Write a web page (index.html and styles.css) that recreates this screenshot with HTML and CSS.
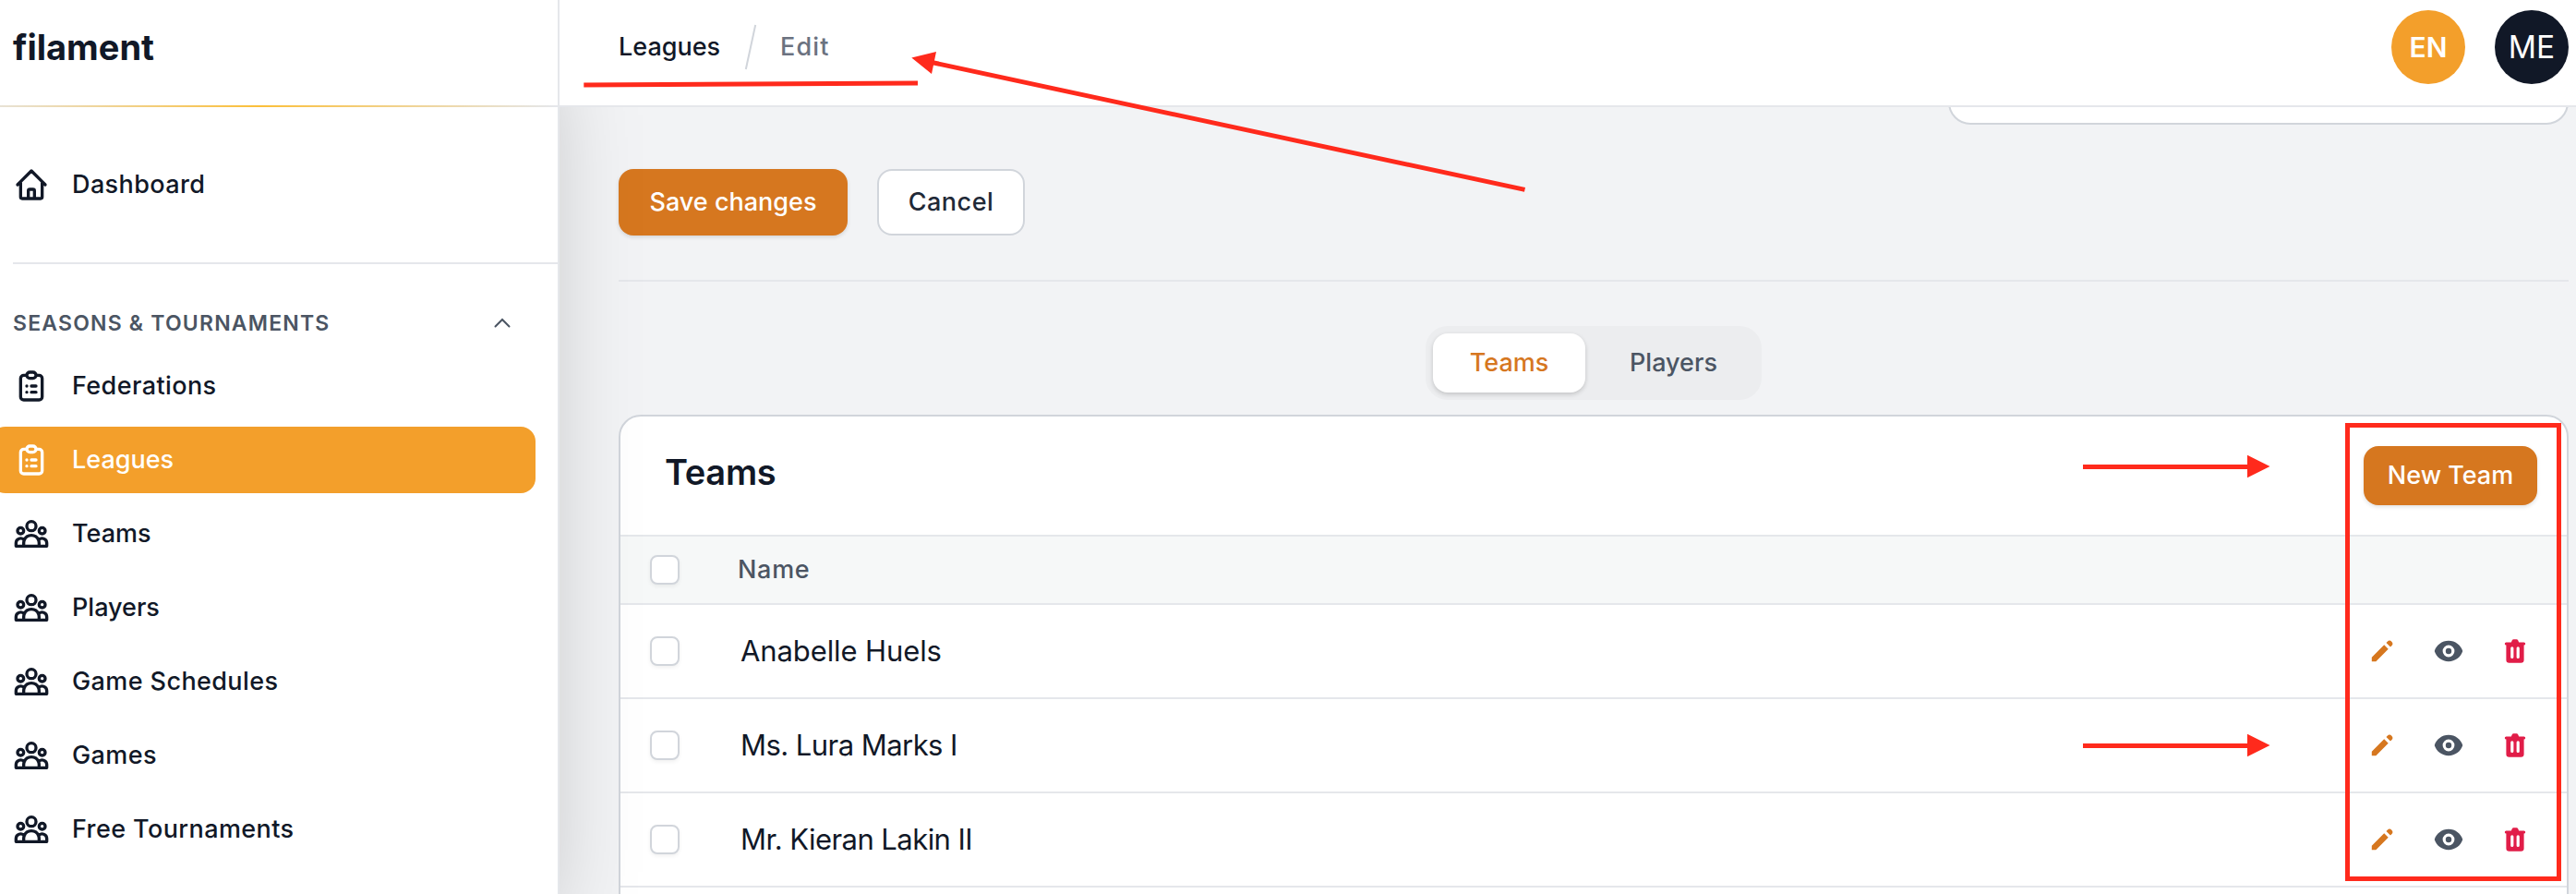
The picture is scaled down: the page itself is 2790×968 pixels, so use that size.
FILE: index.html
```html
<!DOCTYPE html>
<html lang="en">
<head>
<meta charset="utf-8">
<title>Edit League - filament</title>
<link rel="stylesheet" href="styles.css">
</head>
<body>
<svg class="sprite" aria-hidden="true">
  <symbol id="home" viewBox="0 0 24 24"><path d="M3 12l2-2m0 0l7-7 7 7M5 10v10a1 1 0 001 1h3m10-11l2 2m-2-2v10a1 1 0 01-1 1h-3m-6 0a1 1 0 001-1v-4a1 1 0 011-1h2a1 1 0 011 1v4a1 1 0 001 1m-6 0h6"/></symbol>
  <symbol id="clipboard" viewBox="0 0 24 24"><path d="M9 5H7a2 2 0 00-2 2v12a2 2 0 002 2h10a2 2 0 002-2V7a2 2 0 00-2-2h-2M9 5a2 2 0 002 2h2a2 2 0 002-2M9 5a2 2 0 012-2h2a2 2 0 012 2m-3 7h3m-3 4h3m-6-4h.01M9 16h.01"/></symbol>
  <symbol id="group" viewBox="0 0 24 24"><path d="M17 20h5v-2a3 3 0 00-5.356-1.857M17 20H7m10 0v-2c0-.656-.126-1.283-.356-1.857M7 20H2v-2a3 3 0 015.356-1.857M7 20v-2c0-.656.126-1.283.356-1.857m0 0a5.002 5.002 0 019.288 0M15 7a3 3 0 11-6 0 3 3 0 016 0zm6 3a2 2 0 11-4 0 2 2 0 014 0zM7 10a2 2 0 11-4 0 2 2 0 014 0z"/></symbol>
  <symbol id="pencil" viewBox="0 0 20 20"><path d="M13.586 3.586a2 2 0 112.828 2.828l-.793.793-2.828-2.828.793-.793zM11.379 5.793L3 14.172V17h2.828l8.38-8.379-2.83-2.828z"/></symbol>
  <symbol id="eye" viewBox="0 0 20 20"><path d="M10 12a2 2 0 100-4 2 2 0 000 4z"/><path fill-rule="evenodd" d="M.458 10C1.732 5.943 5.522 3 10 3s8.268 2.943 9.542 7c-1.274 4.057-5.064 7-9.542 7S1.732 14.057.458 10zM14 10a4 4 0 11-8 0 4 4 0 018 0z"/></symbol>
  <symbol id="trash" viewBox="0 0 20 20"><path fill-rule="evenodd" d="M9 2a1 1 0 00-.894.553L7.382 4H4a1 1 0 000 2v10a2 2 0 002 2h8a2 2 0 002-2V6a1 1 0 100-2h-3.382l-.724-1.447A1 1 0 0011 2H9zM7 8a1 1 0 012 0v6a1 1 0 11-2 0V8zm5-1a1 1 0 00-1 1v6a1 1 0 102 0V8a1 1 0 00-1-1z"/></symbol>
</svg>

<div class="app">
  <aside class="sidebar">
    <div class="brand"><span class="logo">filament</span></div>
    <nav class="nav">
      <a class="nav-item wide"><svg class="icon"><use href="#home"/></svg><span>Dashboard</span></a>
      <hr class="nav-rule">
      <div class="group-head">
        <span class="group-title">SEASONS &amp; TOURNAMENTS</span>
        <svg class="chevron" viewBox="0 0 20 12"><path d="M2.500 9.500L10 2l7.500 7.500"/></svg>
      </div>
      <div class="group-items">
        <a class="nav-item wide"><svg class="icon"><use href="#clipboard"/></svg><span>Federations</span></a>
        <a class="nav-item active"><svg class="icon"><use href="#clipboard"/></svg><span>Leagues</span></a>
        <a class="nav-item"><svg class="icon"><use href="#group"/></svg><span>Teams</span></a>
        <a class="nav-item"><svg class="icon"><use href="#group"/></svg><span>Players</span></a>
        <a class="nav-item wide"><svg class="icon"><use href="#group"/></svg><span>Game Schedules</span></a>
        <a class="nav-item wide"><svg class="icon"><use href="#group"/></svg><span>Games</span></a>
        <a class="nav-item wide"><svg class="icon"><use href="#group"/></svg><span>Free Tournaments</span></a>
      </div>
    </nav>
  </aside>

  <div class="main">
    <header class="topbar">
      <div class="crumbs">
        <span>Leagues</span>
        <svg class="slash" viewBox="0 0 14 50"><path d="M12.200 1L1.800 49"/></svg>
        <span class="current">Edit</span>
      </div>
      <div class="badges">
        <span class="circle lang">EN</span>
        <span class="circle user">ME</span>
      </div>
    </header>

    <main class="content">
      <div class="form-card"></div>
      <div class="actions">
        <button class="btn primary">Save changes</button>
        <button class="btn secondary">Cancel</button>
      </div>
      <hr class="rule">
      <div class="tabs">
        <button class="tab on">Teams</button>
        <button class="tab">Players</button>
      </div>
      <section class="table-card">
        <div class="card-head">
          <h2 class="card-title">Teams</h2>
          <button class="btn primary small">New Team</button>
        </div>
        <div class="row head"><span class="check"></span><span class="th">Name</span></div>
        <div class="row">
          <span class="check"></span><span class="name">Anabelle Huels</span>
          <span class="tools"><svg class="edit"><use href="#pencil"/></svg><svg class="view"><use href="#eye"/></svg><svg class="del"><use href="#trash"/></svg></span>
        </div>
        <div class="row">
          <span class="check"></span><span class="name tight">Ms. Lura Marks I</span>
          <span class="tools"><svg class="edit"><use href="#pencil"/></svg><svg class="view"><use href="#eye"/></svg><svg class="del"><use href="#trash"/></svg></span>
        </div>
        <div class="row">
          <span class="check"></span><span class="name tight">Mr. Kieran Lakin II</span>
          <span class="tools"><svg class="edit"><use href="#pencil"/></svg><svg class="view"><use href="#eye"/></svg><svg class="del"><use href="#trash"/></svg></span>
        </div>
        <div class="row"></div>
      </section>
    </main>
  </div>
</div>

<svg class="marks" viewBox="0 0 2790 968" aria-hidden="true">
  <path class="line" d="M632.300 92L994 90M1009 67.500L1651.500 205.400M2256 505.500H2436M2256 807.500H2436"/>
  <path class="tip" d="M987.300 62.500L1014 56L1009 80ZM2434 492.700L2458.500 505L2434 517.300ZM2434 794.700L2458.500 807L2434 819.300Z"/>
  <rect class="line" x="2542.500" y="460.500" width="229" height="491"/>
</svg>
</body>
</html>
```
FILE: styles.css
```css
* { box-sizing: border-box; }

body {
  margin: 0;
  height: 968px;
  overflow: hidden;
  font-family: Inter, "Open Sans", sans-serif;
  font-size: 27px;
  font-weight: 500;
  line-height: 40px;
  color: #111827;
  background: #f2f3f5;
}

hr { border: 0; margin: 0; height: 2px; background: #e5e7eb; }
button { font: inherit; border: 0; cursor: pointer; }
.sprite { display: none; }

.app { display: flex; width: 2790px; height: 968px; overflow: hidden; }

/* Sidebar */
.sidebar {
  width: 606px;
  height: 968px;
  flex: none;
  background: #fff;
  border-right: 2px solid #e5e7eb;
  box-shadow: 0 50px 100px -24px rgba(0, 0, 0, .25);
  position: relative;
  z-index: 1;
}

.brand {
  height: 116px;
  display: flex;
  align-items: center;
  padding: 0 0 14px 14px;
  background: linear-gradient(90deg, #e5e7eb -40px, #fbbf3a 281px, #e5e7eb 602px) bottom / 100% 2px no-repeat;
}
.logo { font-size: 38px; font-weight: 700; }

.nav { display: flex; flex-direction: column; padding-top: 48px; }
.nav-item {
  display: flex;
  align-items: center;
  gap: 24px;
  height: 72px;
  width: 590px;
  margin-left: -10px;
  padding-left: 24px;
  border-radius: 16px;
}
.nav-item.wide span { letter-spacing: .4px; }
.nav-item.active { background: #f39f2b; color: #fff; }
.icon {
  width: 40px;
  height: 40px;
  fill: none;
  stroke: currentColor;
  stroke-width: 2;
  stroke-linecap: round;
  stroke-linejoin: round;
}
.nav-rule { margin: 48px 0 0 14px; }
.group-head {
  display: flex;
  align-items: center;
  justify-content: space-between;
  margin: 43px 50px 0 14px;
  height: 41px;
}
.group-title { font-size: 23px; font-weight: 600; letter-spacing: 1.2px; color: #4b5563; }
.chevron { width: 20px; height: 12px; fill: none; stroke: #4b5563; stroke-width: 2; stroke-linecap: round; }
.group-items { display: flex; flex-direction: column; gap: 8px; margin-top: 12px; }

/* Top bar */
.main { flex: 1; display: flex; flex-direction: column; }
.topbar {
  height: 116px;
  flex: none;
  display: flex;
  align-items: center;
  justify-content: space-between;
  padding: 0 8px 12px 64px;
  background: #fff;
  border-bottom: 2px solid #e5e7eb;
  position: relative;
  z-index: 2;
}
.crumbs { display: flex; align-items: center; }
.crumbs .current { color: #6b7280; letter-spacing: 1.1px; }
.slash { width: 14px; height: 50px; margin: 0 25px 0 26px; fill: none; stroke: #d1d5db; stroke-width: 2; }
.badges { display: flex; gap: 32px; }
.circle {
  width: 80px;
  height: 80px;
  border-radius: 50%;
  display: flex;
  align-items: center;
  justify-content: center;
  color: #fff;
}
.lang { background: #f39f2b; font-size: 30px; font-weight: 600; }
.user { background: #111827; font-size: 33.500px; font-weight: 400; }

/* Content */
.content { flex: 1; display: flex; flex-direction: column; padding: 0 8px 0 64px; }
.form-card {
  align-self: flex-end;
  flex: none;
  width: 672px;
  height: 60px;
  margin-top: -41px;
  background: #fff;
  border: 2px solid #d1d5db;
  border-radius: 24px;
}
.actions { display: flex; gap: 32px; margin: 48px 0; }
.btn {
  height: 72px;
  border-radius: 16px;
  padding: 0;
  display: flex;
  align-items: center;
  justify-content: center;
  color: #fff;
}
.actions .primary { width: 248px; }
.btn.primary { background: #d6771f; box-shadow: 0 2px 4px rgba(0, 0, 0, .12); }
.btn.secondary { width: 160px; background: #fff; border: 2px solid #d1d5db; color: #1f2937; letter-spacing: .5px; }
.btn.small { width: 188px; height: 64px; }
.rule { flex: none; }

.tabs {
  align-self: center;
  display: flex;
  gap: 8px;
  width: 364px;
  height: 80px;
  flex: none;
  margin-top: 48px;
  padding: 8px;
  border-radius: 24px;
  background: #ecedef;
}
.tab { width: 165px; border-radius: 16px; background: none; color: #4b5563; padding: 0; }
.tab:last-child { width: 175px; }
.tab.on { background: #fff; color: #d6771f; box-shadow: 0 2px 5px rgba(0, 0, 0, .18); }

.table-card {
  margin-top: 16px;
  height: 700px;
  flex: none;
  background: #fff;
  border: 2px solid #d1d5db;
  border-radius: 24px;
  overflow: hidden;
}
.card-head {
  height: 130px;
  display: flex;
  align-items: center;
  justify-content: space-between;
  padding: 0 32px 0 48px;
  border-bottom: 2px solid #e5e7eb;
}
.card-title { margin: 0; padding-bottom: 8px; font-size: 38px; font-weight: 600; letter-spacing: -.3px; }
.row {
  height: 102px;
  display: flex;
  align-items: center;
  padding: 0 40px 0 32px;
  border-bottom: 2px solid #e5e7eb;
}
.row.head { height: 74px; background: #f6f8f8; }
.check {
  width: 32px;
  height: 32px;
  background: #fff;
  border: 2px solid #d1d5db;
  border-radius: 8px;
  box-shadow: 0 2px 4px rgba(0, 0, 0, .06);
}
.th { margin-left: 63px; color: #4b5563; letter-spacing: .7px; }
.name { margin-left: 66px; padding-bottom: 1px; font-size: 31px; font-weight: 400; letter-spacing: -.1px; }
.name.tight { letter-spacing: -.55px; }
.tools { margin-left: auto; display: flex; gap: 40px; }
.tools svg { width: 32px; height: 32px; fill: currentColor; }
.edit { color: #d6771f; }
.view { color: #4b5563; }
.del { color: #e11d48; }

/* Annotation arrows drawn over the page */
.marks { position: absolute; left: 0; top: 0; width: 2790px; height: 968px; z-index: 5; pointer-events: none; }
.marks .line { fill: none; stroke: #ff2a1c; stroke-width: 5; }
.marks .tip { fill: #ff2a1c; }
```
